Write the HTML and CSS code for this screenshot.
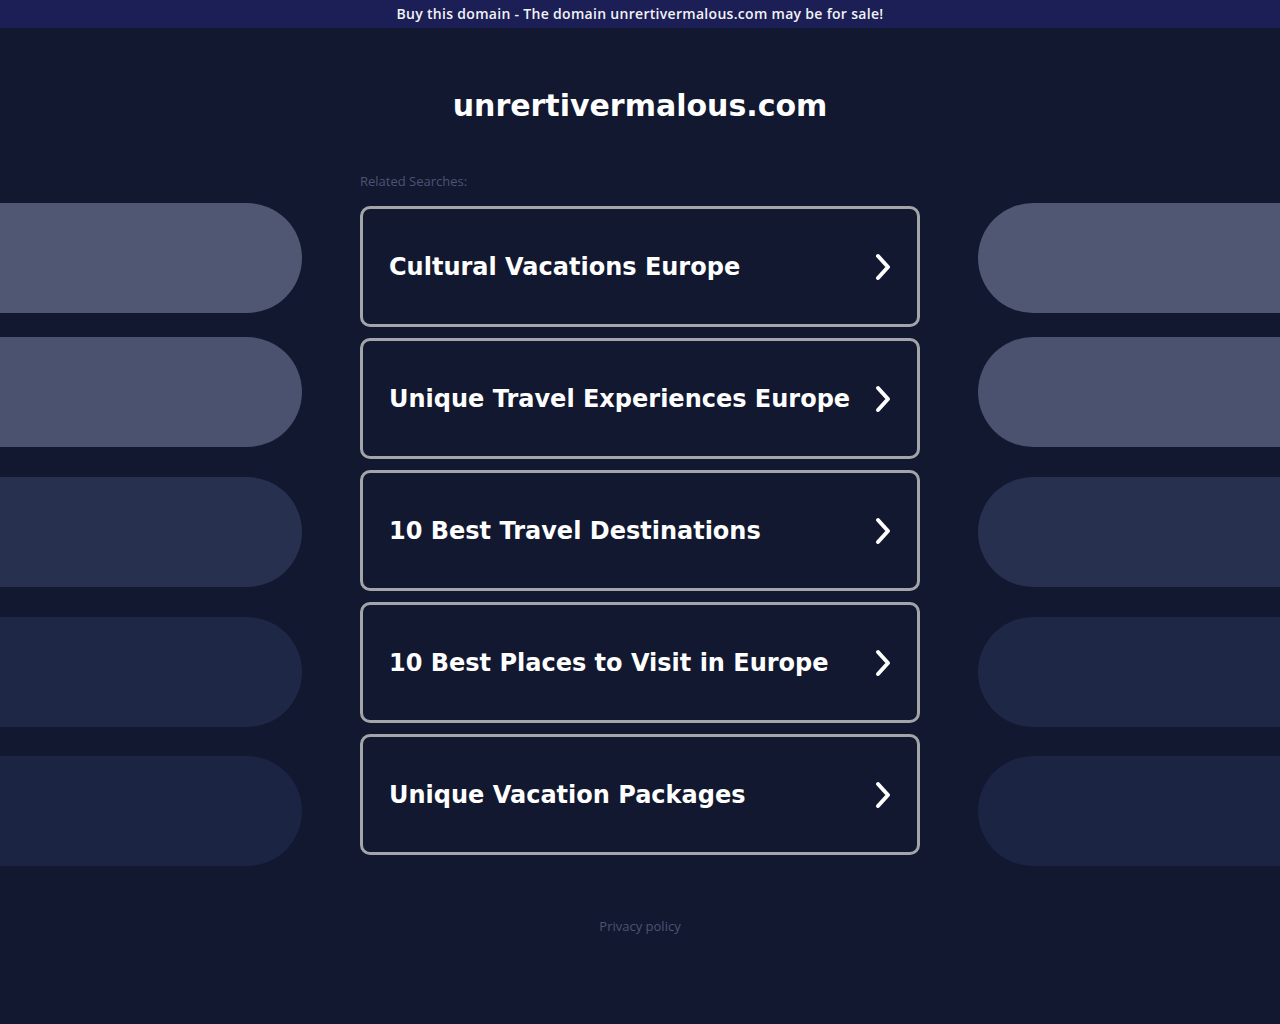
FILE: index.html
```html
<!DOCTYPE html>
<html lang="en">
<head>
<meta charset="utf-8">
<title>unrertivermalous.com</title>
<link rel="stylesheet" href="styles.css">
</head>
<body>
<div class="topbar">Buy this domain - The domain unrertivermalous.com may be for sale!</div>
<h1 class="title">unrertivermalous.com</h1>
<div class="label">Related Searches:</div>
<div class="layout">
  <div class="pills pills-left">
    <div class="pill p1"></div>
    <div class="pill p2"></div>
    <div class="pill p3"></div>
    <div class="pill p4"></div>
    <div class="pill p5"></div>
  </div>
  <div class="cards">
    <a class="card" href="#"><span>Cultural Vacations Europe</span><svg class="chev" viewBox="0 0 16 28"><path d="M3 3 L13 14 L3 25"/></svg></a>
    <a class="card" href="#"><span>Unique Travel Experiences Europe</span><svg class="chev" viewBox="0 0 16 28"><path d="M3 3 L13 14 L3 25"/></svg></a>
    <a class="card" href="#"><span>10 Best Travel Destinations</span><svg class="chev" viewBox="0 0 16 28"><path d="M3 3 L13 14 L3 25"/></svg></a>
    <a class="card" href="#"><span>10 Best Places to Visit in Europe</span><svg class="chev" viewBox="0 0 16 28"><path d="M3 3 L13 14 L3 25"/></svg></a>
    <a class="card" href="#"><span>Unique Vacation Packages</span><svg class="chev" viewBox="0 0 16 28"><path d="M3 3 L13 14 L3 25"/></svg></a>
  </div>
  <div class="pills pills-right">
    <div class="pill p1"></div>
    <div class="pill p2"></div>
    <div class="pill p3"></div>
    <div class="pill p4"></div>
    <div class="pill p5"></div>
  </div>
</div>
<div class="footer"><a href="#">Privacy policy</a></div>
</body>
</html>
```
FILE: styles.css
```css
html, body {
  margin: 0;
  padding: 0;
  background: #121830;
  min-height: 1024px;
}
body {
  font-family: "DejaVu Sans", sans-serif;
  color: #fff;
}
.topbar {
  height: 28px;
  line-height: 28px;
  background: #1b1f55;
  color: #f2f2f5;
  text-align: center;
  font-family: "Open Sans", sans-serif;
  font-size: 14px;
  font-weight: 600;
  letter-spacing: 0.3px;
}
.title {
  margin: 0;
  padding-top: 60px;
  height: 36px;
  line-height: 36px;
  text-align: center;
  font-family: "DejaVu Sans", sans-serif;
  font-weight: bold;
  font-size: 30px;
  color: #fff;
}
.label {
  width: 560px;
  margin: 50px auto 0;
  font-family: "Open Sans", sans-serif;
  font-size: 13px;
  line-height: 15px;
  color: #4b5470;
}
.layout {
  margin-top: 14px;
  display: grid;
  grid-template-columns: 302px 560px 302px;
  column-gap: 58px;
  align-items: start;
}
.pills {
  display: flex;
  flex-direction: column;
}
.pill {
  height: 110px;
}
.pill.p2 { margin-top: 24px; }
.pill.p3 { margin-top: 30px; }
.pill.p4 { margin-top: 30px; }
.pill.p5 { margin-top: 29px; }
.pills-left .pill { border-radius: 0 55px 55px 0; }
.pills-right .pill { border-radius: 55px 0 0 55px; }
.p1 { background: #4f5772; }
.p2 { background: #4a526f; }
.p3 { background: #28304f; }
.p4 { background: #1f2747; }
.p5 { background: #1c2444; }
.cards {
  padding-top: 3px;
  display: flex;
  flex-direction: column;
  gap: 11px;
}
.card {
  box-sizing: border-box;
  height: 121px;
  border: 3px solid #a3a5a8;
  border-radius: 10px;
  display: flex;
  align-items: center;
  justify-content: space-between;
  padding: 0 26px 0 26px;
  text-decoration: none;
  color: #fff;
  font-family: "DejaVu Sans", sans-serif;
  font-weight: bold;
  font-size: 24px;
}
.chev {
  width: 16px;
  height: 28px;
  flex: none;
  fill: none;
  stroke: #fff;
  stroke-width: 4;
  stroke-linecap: round;
  stroke-linejoin: round;
}
.footer {
  margin-top: 53px;
  text-align: center;
  font-family: "Open Sans", sans-serif;
  font-size: 13px;
  line-height: 15px;
}
.footer a {
  color: #4b5470;
  text-decoration: none;
}
```
